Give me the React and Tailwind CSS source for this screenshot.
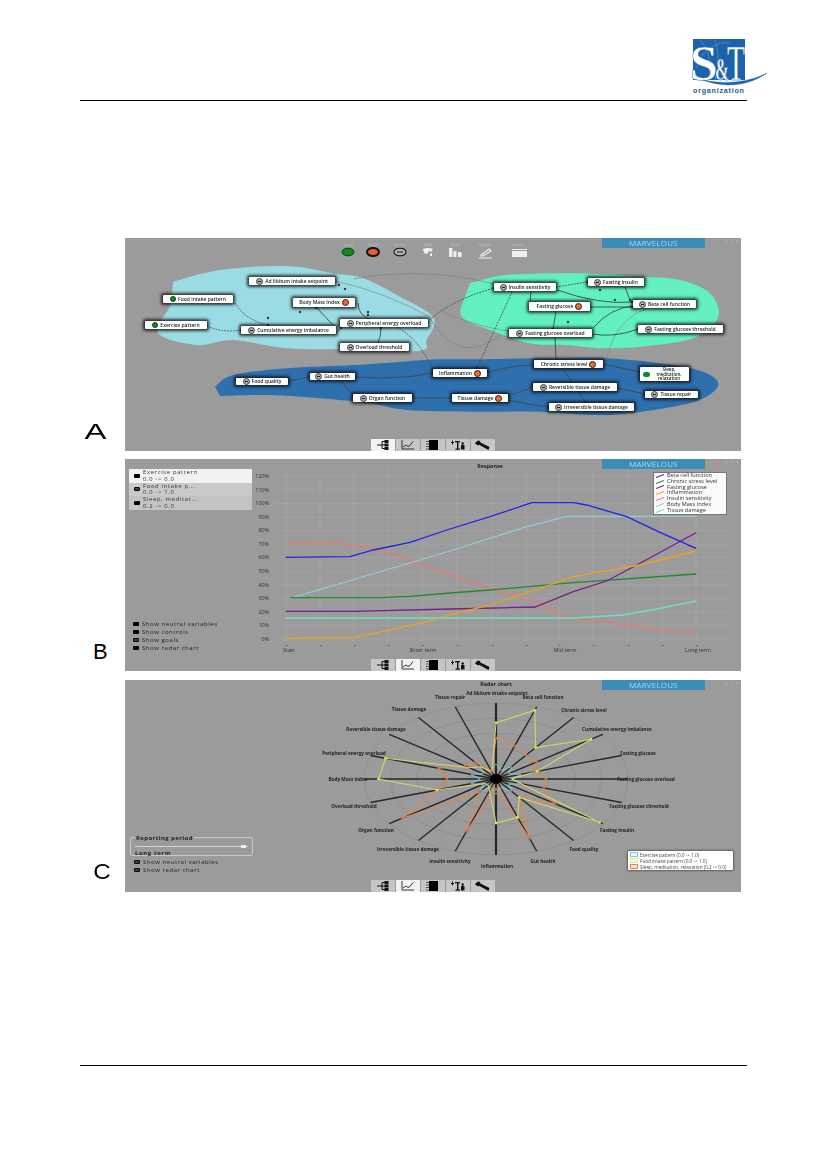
import React from "react";

const FONT = { fontFamily: "'Open Sans', 'Liberation Sans', sans-serif" };
const z = (ox, oy, pts) => pts.map(([x, y]) => [ox + x / 3, oy + y / 3]);
const poly = (pts) => pts.map((p) => p.map((v) => v.toFixed(1)).join(",")).join(" ");
const smooth = (pts) => {
  let d = `M${pts[0][0]} ${pts[0][1]}`;
  for (let i = 0; i < pts.length - 1; i++) {
    const p0 = pts[i - 1] || pts[i], p1 = pts[i], p2 = pts[i + 1], p3 = pts[i + 2] || p2;
    d += ` C${p1[0] + (p2[0] - p0[0]) / 6} ${p1[1] + (p2[1] - p0[1]) / 6} ${p2[0] - (p3[0] - p1[0]) / 6} ${p2[1] - (p3[1] - p1[1]) / 6} ${p2[0]} ${p2[1]}`;
  }
  return d + " Z";
};

/* ---------- Panel A data ---------- */
const cyan = [...z(120, 230, [[160,155],[300,120],[500,108],[640,130],[730,145],[830,195],[940,262],[920,330],[900,362],[700,358],[500,355],[340,330],[230,345],[115,310],[150,230]])];
const mint = [...z(440, 230, [[90,160],[200,135],[420,130],[600,140],[720,150],[810,190],[835,260],[770,320],[650,345],[500,355],[380,345],[270,340],[150,300],[65,260],[75,200]])];
const blue = [
  ...z(120, 230, [[285,470],[340,435],[500,415],[700,405],[850,395],[950,388]]),
  ...z(440, 230, [[100,388],[300,385],[500,385],[700,405],[800,430],[835,465],[790,505],[700,530],[500,555],[300,545],[100,545]]),
  ...z(120, 230, [[860,540],[750,520],[600,505],[450,495],[300,498]]),
];

const nodes = [
  ["Ad libitum intake setpoint", 249, 277, 86, 8, "n"],
  ["Food intake pattern", 163, 295, 70, 8, "g"],
  ["Exercise pattern", 145, 321, 62, 8, "g"],
  ["Cumulative energy imbalance", 241, 326, 95, 8, "n"],
  ["Body Mass Index", 293, 298, 62, 9, "o"],
  ["Peripheral energy overload", 340, 319, 88, 8, "n"],
  ["Overload threshold", 340, 343, 69, 8, "n"],
  ["Food quality", 236, 378, 52, 7, "n"],
  ["Gut health", 310, 373, 45, 7, "n"],
  ["Organ function", 353, 394, 59, 8, "n"],
  ["Inflammation", 433, 369, 54, 8, "o"],
  ["Tissue damage", 452, 394, 56, 8, "o"],
  ["Chronic stress level", 534, 360, 69, 8, "o"],
  ["Reversible tissue damage", 533, 383, 84, 8, "n"],
  ["Irreversible tissue damage", 549, 403, 85, 8, "n"],
  ["Tissue repair", 645, 391, 53, 7, "n"],
  ["Insulin sensitivity", 494, 283, 62, 8, "n"],
  ["Fasting insulin", 588, 278, 56, 8, "n"],
  ["Fasting glucose", 529, 302, 61, 9, "o"],
  ["Beta cell function", 633, 300, 63, 8, "n"],
  ["Fasting glucose overload", 509, 329, 83, 8, "n"],
  ["Fasting glucose threshold", 638, 325, 85, 8, "n"],
];

const thin = [
  "M353 279 C390 272 440 270 494 284",
  "M440 310 C470 325 500 330 510 331",
  "M606 360 C612 335 625 315 647 309",
  "M430 318 C445 345 470 360 500 335",
  "M335 281 Q385 292 432 318",
];
const solid = [
  "M316 307 L333 325", "M358 303 Q358 316 372 320", "M378 343 Q381 336 381 328",
  "M557 290 Q600 305 632 302", "M625 287 L630 300", "M590 307 L632 307", "M531 291 L530 302",
  "M556 311 L553 329", "M593 328 Q610 308 633 306", "M592 334 Q615 338 638 329", "M555 337 L556 360",
  "M562 368 L573 383", "M578 391 L586 403", "M617 388 L645 394", "M603 364 L640 372",
  "M487 373 Q510 365 534 365", "M355 377 Q400 380 433 373", "M288 381 L310 377", "M340 380 L353 395",
  "M412 398 L452 398", "M508 400 Q530 405 549 407", "M508 396 Q520 392 533 387", "M336 333 L341 328",
];
const dashed = [
  "M235 303 Q245 320 268 325", "M207 326 Q222 333 241 330", "M397 327 Q420 340 433 370",
  "M430 320 C445 305 470 295 494 288", "M512 292 L477 368", "M556 287 L587 282",
];
const dots = [
  [268,325],[241,330],[316,308],[372,320],[381,328],[433,370],[494,288],[477,368],[587,282],[632,302],[630,300],[632,307],
  [553,329],[633,306],[638,329],[556,360],[573,383],[586,403],[645,394],[640,372],[534,365],[433,373],[310,377],[353,395],
  [452,398],[549,407],[533,387],[341,328],[339,285],[345,289],[368,315],[568,322],[600,290],[615,300],[300,312],[268,318],[368,312],
];

/* ---------- Panel B data ---------- */
const s3 = (p) => z(120, 455, p);
const s4 = (p) => z(440, 455, p);
const series = [
  ["#e87a72", [...s3([[497,266],[670,266],[780,285],[880,320],[990,358]]), ...s4([[150,400],[280,440],[380,485],[500,503],[768,537]])]],
  ["#8fcbd6", [...s3([[510,430],[990,288]]), ...s4([[250,218],[380,184],[768,184]])]],
  ["#1f8a2c", [...s3([[510,428],[780,428],[870,424],[990,414]]), ...s4([[150,405],[400,383],[768,357]])]],
  ["#7d1a8c", [...s3([[497,469],[700,469],[990,462]]), ...s4([[285,456],[400,410],[500,378],[600,325],[768,233]])]],
  ["#eda11f", [...s3([[497,550],[700,548],[800,527],[900,505],[990,480]]), ...s4([[150,450],[300,400],[400,365],[500,347],[600,330],[768,288]])]],
  ["#6fe0bd", [...s3([[497,489],[990,489]]), ...s4([[400,489],[550,480],[650,462],[768,438]])]],
  ["#2323e6", [...s3([[497,307],[690,305],[760,285],[870,262],[990,222]]), ...s4([[150,185],[275,143],[400,143],[440,150],[560,185],[660,232],[768,280]])]],
];
const legendB = [
  ["Beta cell function", "#2323e6"], ["Chronic stress level", "#1f8a2c"], ["Fasting glucose", "#7d1a8c"], ["Inflammation", "#eda11f"],
  ["Insulin sensitivity", "#e87a72"], ["Body Mass Index", "#8fcbd6"], ["Tissue damage", "#6fe0bd"],
];
const yTicks = ["0%","10%","20%","30%","40%","50%","60%","70%","80%","90%","100%","110%","120%"];
const xTicks = [286, 320, 354, 388, 422, 457, 492, 526, 559, 593, 628, 662, 696];

/* ---------- Panel C data ---------- */
const radar = [
  ["Ad libitum intake setpoint", 497, 693], ["Beta cell function", 543, 697], ["Chronic stress level", 584, 710],
  ["Cumulative energy imbalance", 617, 729], ["Fasting glucose", 638, 753], ["Fasting glucose overload", 646, 779],
  ["Fasting glucose threshold", 639, 806], ["Fasting insulin", 617, 830], ["Food quality", 584, 849],
  ["Gut health", 543, 861], ["Inflammation", 497, 866], ["Insulin sensitivity", 450, 861],
  ["Irreversible tissue damage", 408, 849], ["Organ function", 376, 830], ["Overload threshold", 354, 806],
  ["Body Mass Index", 348, 779], ["Peripheral energy overload", 354, 753], ["Reversible tissue damage", 376, 729],
  ["Tissue damage", 409, 709], ["Tissue repair", 450, 697],
];
const CX = 496, CY = 779, RX = 132, RY = 76;
const at = (i, f) => {
  const a = (i * 18 * Math.PI) / 180;
  return [CX + Math.sin(a) * RX * f, CY - Math.cos(a) * RY * f];
};
const yellowV = [.74,.95,.51,.89,.33,.12,.2,.97,.3,.53,.58,.16,.1,.1,.47,.89,.88,.25,.2,.1];
const orangeV = [.54,.46,.39,.38,.3,.38,.38,.55,.3,.82,.13,.72,.21,.88,.47,.37,.46,.29,.27,.11];
const cyanV = Array.from({ length: 20 }, (_, i) => (i % 2 ? .12 : .2));

/* ---------- Shared pieces ---------- */
function Bullet({ kind }) {
  if (kind === "g") return <span className="w-[6px] h-[6px] rounded-full bg-[#0f8a1e] border border-[#0a4d12] shrink-0" />;
  if (kind === "o") return <span className="w-[7px] h-[7px] rounded-full bg-[#ee6a35] border-[1.5px] border-[#222] shrink-0" />;
  return (
    <span className="w-[7px] h-[7px] rounded-full bg-[#aaa] border border-[#444] shrink-0 flex items-center justify-center">
      <span className="w-[3px] h-px bg-[#222]" />
    </span>
  );
}

function DiagramNode({ n }) {
  const [label, x, y, w, h, kind] = n;
  return (
    <div
      className="absolute bg-white rounded-[1px] shadow-[0_0_3px_2px_rgba(15,15,15,0.8)] flex items-center justify-center gap-[2px] px-[2px] text-[5px] font-semibold leading-none text-[#222] whitespace-nowrap"
      style={{ left: x - 125, top: y - 238, width: w, height: h }}
    >
      {kind !== "o" && <Bullet kind={kind} />}
      <span>{label}</span>
      {kind === "o" && <Bullet kind={kind} />}
    </div>
  );
}

function Toolbar({ active }) {
  const icons = [
    <g key="a" fill="none" stroke="#111" strokeWidth="1">
      <path d="M2 6h5M7 2.5v7M7 2.5h3M7 6h3M7 9.5h3" /><rect x="10" y="1.5" width="3" height="2" fill="#111" /><rect x="10" y="5" width="3" height="2" fill="#111" /><rect x="10" y="8.5" width="3" height="2" fill="#111" />
    </g>,
    <g key="b" fill="none" stroke="#222" strokeWidth="0.9">
      <path d="M2 1v9h12" /><path d="M3 8l3-2 2 1.5 2-1 3-4" />
    </g>,
    <g key="c">
      <rect x="4" y="1" width="9" height="10" fill="#000" /><path d="M1 2.5h3M1 5h3M1 7.5h3M1 10h3" stroke="#222" strokeWidth=".7" />
    </g>,
    <g key="d" fill="#111">
      <path d="M1 3h3v1H1zM2 1.5h1v4H2z" /><rect x="5" y="2" width="5" height="1.3" /><rect x="7" y="2" width="1.4" height="8" /><rect x="5.5" y="9.5" width="4.5" height="1.2" /><path d="M11 6h3.5v4.5H11z" /><circle cx="12.7" cy="4.5" r="1.2" />
    </g>,
    <path key="e" d="M0.5 3.5L3 1.5l2 .5.5 1.5 9 4.5-1 3-9-5-2 .2-2.5-2z" fill="#111" />,
  ];
  return (
    <div className="absolute bottom-0 left-0 right-0 flex justify-center">
      <div className="flex gap-px">
        {icons.map((ic, i) => (
          <div key={i} className={`w-[24px] h-[12px] flex items-center justify-center ${i === active ? "bg-[#f2f2f2]" : "bg-[#c6c6c6]"}`}>
            <svg width="16" height="12" viewBox="0 0 16 12">{ic}</svg>
          </div>
        ))}
      </div>
    </div>
  );
}

function Banner() {
  return (
    <>
      <div className="absolute top-0 left-[477px] w-[103px] h-[10px] bg-[#3a8db8] flex items-center justify-center text-[8px] leading-none tracking-[0.2px] text-[#a5dcef]">MARVELOUS</div>
      <div className="absolute top-[1px] right-[2px] text-[4px] leading-none tracking-[1px] text-[#c9c9c9]">— ▫ ×</div>
    </>
  );
}

function Check({ label, on }) {
  return (
    <div className="flex items-center gap-[3px] h-[8px] pl-[4px] text-[6px] leading-none tracking-[0.55px] text-[#222]">
      <span className={`w-[6px] h-[4px] rounded-[1px] ${on ? "bg-black" : "bg-[#444] border border-black"}`} />
      <span>{label}</span>
    </div>
  );
}

function PanelA() {
  return (
    <div className="relative w-[616px] h-[213px] bg-[#9b9b9b] overflow-hidden blur-[0.6px]" style={FONT}>
      <svg className="absolute inset-0 w-full h-full" viewBox="125 238 616 213">
        <path d={smooth(cyan)} fill="#9bdbe3" />
        <path d={smooth(mint)} fill="#62f0bf" />
        <path d={smooth(blue)} fill="#2e6fae" />
        {thin.map((d, i) => <path key={i} d={d} fill="none" stroke="#808080" strokeWidth=".6" />)}
        {solid.map((d, i) => <path key={i} d={d} fill="none" stroke="#3c4a4c" strokeWidth=".9" />)}
        {dashed.map((d, i) => <path key={i} d={d} fill="none" stroke="#4a5a5e" strokeWidth="1" strokeDasharray="1.8 1.2" />)}
        {dots.map(([x, y], i) => <circle key={i} cx={x} cy={y} r="1.2" fill="#2f3a3c" />)}

        <g>
          {[[348,"Control"],[373,"Output"],[400,"Neutral"],[428,"World"],[455,"Charts"],[485,"Highlight"],[518,"Scenario"]].map(([x, t]) => (
            <text key={t} x={x} y="246" fontSize="2.8" textAnchor="middle" fill="#c4c4c4">{t}</text>
          ))}
          <ellipse cx="348" cy="252" rx="6" ry="3.8" fill="#0f8a1e" stroke="#0c3d14" />
          <ellipse cx="373" cy="252" rx="6" ry="4" fill="#ee5d2e" stroke="#111" strokeWidth="2" />
          <ellipse cx="400" cy="252" rx="6" ry="3.8" fill="#b5b5b5" stroke="#111" strokeWidth="1.1" />
          <path d="M397 252h6" stroke="#111" strokeWidth="1" />
          <path d="M423 249q5-2 10 0l-2 3-2-1-2 3-3-1zM430 254l2-1v3h-2z" fill="#efefef" />
          <path d="M449 257v-9h3.5v9zM453.5 257v-6h3v6zM458 257v-5h3.5v5z" fill="#efefef" />
          <path d="M481 255l8-6 2 2-8 5h-2zM479 258h13" stroke="#efefef" strokeWidth="1.2" fill="none" />
          <path d="M512 251h15v6h-15zM512 249h15v1h-15z" fill="#f0f0f0" />
        </g>
      </svg>
      {nodes.map((n) => <DiagramNode key={n[0]} n={n} />)}
      <div className="absolute left-[515px] top-[129px] w-[49px] h-[14px] bg-white rounded-[1px] shadow-[0_0_3px_2px_rgba(15,15,15,0.8)] flex items-center gap-[2px] px-[3px] text-[4.5px] font-semibold leading-[4.6px] text-[#222]">
        <span className="w-[7px] h-[5px] rounded-full bg-[#0f8a1e] shrink-0" />
        <span className="text-center">Sleep, meditation, relaxation</span>
      </div>
      <Banner />
      <Toolbar active={0} />
    </div>
  );
}

function PanelB() {
  return (
    <div className="relative w-[616px] h-[212px] bg-[#9b9b9b] overflow-hidden blur-[0.6px]" style={FONT}>
      <svg className="absolute inset-0 w-full h-full" viewBox="125 459 616 212">
        {yTicks.map((t, i) => {
          const y = 639 - i * 13.55;
          return (
            <g key={t}>
              <line x1="275" x2="732" y1={y} y2={y} stroke="#a8a8a8" strokeWidth=".6" />
              <text x="269" y={y + 1.7} fontSize="5.4" textAnchor="end" fill="#333">{t}</text>
            </g>
          );
        })}
        {xTicks.map((x) => (
          <g key={x}>
            <line x1={x} x2={x} y1="468" y2="642" stroke="#adadad" strokeWidth=".6" />
            <line x1={x} x2={x + 1.5} y1="645.5" y2="645.5" stroke="#444" strokeWidth=".6" />
          </g>
        ))}
        {[["Start", 289], ["Short term", 423], ["Mid term", 565], ["Long term", 698]].map(([t, x]) => (
          <text key={t} x={x} y="652" fontSize="5.4" textAnchor="middle" fill="#333">{t}</text>
        ))}
        <text x="490" y="468" fontSize="5.4" fontWeight="700" textAnchor="middle" fill="#222">Response</text>
        {series.map(([c, pts]) => <polyline key={c} points={poly(pts)} fill="none" stroke={c} strokeWidth="1.3" />)}
      </svg>
      <div className="absolute left-[528px] top-[13px] w-[74px] h-[43px] bg-white/95 border border-[#777] flex flex-col pl-[2px] text-[5.6px] leading-[5.8px] text-[#333]">
        {legendB.map(([t, c]) => (
          <div key={t} className="flex items-center gap-[3px] whitespace-nowrap">
            <svg width="8" height="4" viewBox="0 0 8 4"><path d="M0 3.5L8 .5" stroke={c} strokeWidth="1.1" /></svg>
            <span>{t}</span>
          </div>
        ))}
      </div>
      <div className="absolute inset-0 flex flex-col justify-between pl-[4px] pt-[10px] pb-[19px] w-[127px]">
        <div className="flex flex-col text-[5.8px] leading-[6.5px] text-[#333]">
          {[["Exercise pattern", "0.0 -> 0.0", "bg-[#f1f1f1]", true], ["Food intake p...", "0.0 -> 1.0", "bg-[#c9c9c9]", false], ["Sleep, meditat...", "0.2 -> 0.0", "bg-[#c3c3c3]", true]].map(([a, b, bg, on]) => (
            <div key={a} className={`h-[13.5px] ${bg} flex items-center gap-[3px] pl-[5px]`}>
              <span className={`w-[6px] h-[4px] rounded-[1px] ${on ? "bg-black" : "bg-[#444] border border-black"}`} />
              <div className="tracking-[0.7px]"><div>{a}</div><div>{b}</div></div>
            </div>
          ))}
        </div>
        <div>
          <Check label="Show neutral variables" on />
          <Check label="Show controls" on />
          <Check label="Show goals" />
          <Check label="Show radar chart" on />
        </div>
      </div>
      <Banner />
      <Toolbar active={1} />
    </div>
  );
}

function PanelC() {
  const spokes = radar.map((_, i) => at(i, 1));
  return (
    <div className="relative w-[616px] h-[212px] bg-[#9b9b9b] overflow-hidden blur-[0.6px]" style={FONT}>
      <svg className="absolute inset-0 w-full h-full" viewBox="125 680 616 212">
        {[.2, .4, .6, .8, 1].map((f) => (
          <ellipse key={f} cx={CX} cy={CY} rx={RX * f} ry={RY * f} fill="none" stroke="#888" strokeWidth=".6" />
        ))}
        {spokes.map(([x, y], i) => (
          <line key={i} x1={CX} y1={CY} x2={x} y2={y} stroke="#262626" strokeWidth={i % 10 === 0 ? 2.2 : 1.4} />
        ))}
        <ellipse cx={CX} cy={CY} rx="6" ry="5" fill="#000" />
        <polygon points={poly(cyanV.map((f, i) => at(i, f)))} fill="none" stroke="#7fd0d8" strokeWidth=".8" />
        <polygon points={poly(orangeV.map((f, i) => at(i, f)))} fill="none" stroke="#d98a56" strokeWidth="1.2" />
        <polygon points={poly(yellowV.map((f, i) => at(i, f)))} fill="none" stroke="#d2d66e" strokeWidth="1.1" />
        {orangeV.map((f, i) => { const [x, y] = at(i, f); return <circle key={i} cx={x} cy={y} r="1.3" fill="#e8622a" />; })}
        {yellowV.map((f, i) => { const [x, y] = at(i, f); return f > .25 ? <rect key={i} x={x - 1.2} y={y - 1.2} width="2.4" height="2.4" fill="#e2ee3c" /> : null; })}
        {radar.map(([t, x, y]) => (
          <text key={t} x={x} y={y + 1.5} fontSize="4.7" fontWeight="700" textAnchor="middle" fill="#222">{t}</text>
        ))}
        <text x="496" y="686" fontSize="5.4" fontWeight="700" textAnchor="middle" fill="#222">Radar chart</text>
      </svg>
      <div className="absolute left-[503px] top-[171px] w-[105px] h-[19px] bg-white rounded-[1px] shadow-[0_0_2px_1px_rgba(50,50,50,0.6)] flex flex-col justify-center pl-[2px] text-[4.7px] leading-[6px] text-[#444]">
        {[["Exercise pattern (0.0 -> 1.0)", "border-[#79c9e0] bg-[#e6f6fb]"], ["Food intake pattern (0.0 -> 1.0)", "border-[#e7e89a] bg-[#fbfbd8]"], ["Sleep, meditation, relaxation (0.2 -> 0.0)", "border-[#e8894f] bg-[#fbe3d2]"]].map(([t, c]) => (
          <div key={t} className="flex items-center gap-[2px] whitespace-nowrap">
            <span className={`w-[8px] h-[5px] border ${c}`} />
            <span>{t}</span>
          </div>
        ))}
      </div>
      <div className="absolute left-[5px] bottom-[18px] w-[123px]">
        <div className="relative h-[19px] border border-[#c8c8c8] rounded-[2px] px-[4px] text-[6px] leading-none font-bold text-[#222]">
          <span className="absolute -top-[3px] left-[4px] bg-[#9b9b9b] px-[1px] tracking-[0.4px]">Reporting period</span>
          <div className="relative mt-[8px] h-px bg-[#d4d4d4]">
            <span className="absolute right-[2px] -top-[1px] w-[5px] h-[3px] bg-[#eee]" />
          </div>
          <div className="mt-[3px] tracking-[0.6px]">Long term</div>
        </div>
        <div className="pt-[2px]">
          <Check label="Show neutral variables" />
          <Check label="Show radar chart" />
        </div>
      </div>
      <Banner />
      <Toolbar active={1} />
    </div>
  );
}

function Logo() {
  const serif = { fontFamily: "'Liberation Serif', serif" };
  return (
    <svg width="80" height="62" viewBox="688 36 80 62" className="mb-[2px] -mr-[21px]">
      <rect x="693" y="39" width="52" height="41" fill="#1c63ac" />
      <path d="M697 68a30 30 0 0 1 34-25M700 40c10 10 12 28 8 40M715 40c4 12 4 26 0 40" fill="none" stroke="#5f9ad0" strokeWidth=".6" />
      <text x="690" y="80" fontSize="50" fontWeight="700" fill="#fff" stroke="#1c63ac" strokeWidth=".4" style={serif}>S</text>
      <text x="715" y="80" fontSize="32" fontWeight="700" fill="#fff" stroke="#1c63ac" strokeWidth=".6" style={serif} textLength="14" lengthAdjust="spacingAndGlyphs">&amp;</text>
      <text x="727" y="80" fontSize="50" fill="#fff" stroke="#1c63ac" strokeWidth=".3" style={serif} textLength="18" lengthAdjust="spacingAndGlyphs">T</text>
      <path d="M703 80 C726 89 750 85 767 73 C750 82 726 85 703 80Z" fill="#1c63ac" stroke="#1c63ac" strokeWidth=".4" />
      <text x="693" y="92.5" fontSize="7.2" fontWeight="700" letterSpacing=".75" fill="#2a5a8c" style={{ fontFamily: "'Liberation Sans', sans-serif" }}>organization</text>
    </svg>
  );
}

function Row({ letter, children, mt, letterClass }) {
  return (
    <div className={`flex items-end ${mt}`}>
      <div className={`w-[45px] origin-left leading-none text-black text-[22px] ${letterClass}`} style={{ fontFamily: "'Liberation Sans', sans-serif" }}>
        {letter}
      </div>
      {children}
    </div>
  );
}

export default function App() {
  return (
    <div className="w-[827px] h-[1169px] bg-white overflow-hidden">
      <header className="ml-[80px] w-[667px] h-[101px] border-b border-black flex justify-end items-end">
        <Logo />
      </header>
      <main className="ml-[80px] pt-[137px]">
        <Row letter="A" mt="" letterClass="pb-[8px] pl-[3px] scale-x-[1.5]"><PanelA /></Row>
        <Row letter="B" mt="mt-[8px]" letterClass="pb-[8px] pl-[13px]"><PanelB /></Row>
        <Row letter="C" mt="mt-[9px]" letterClass="pb-[9px] pl-[12px] scale-x-110"><PanelC /></Row>
      </main>
      <footer className="ml-[80px] w-[667px] mt-[173px] border-t border-black" />
    </div>
  );
}
